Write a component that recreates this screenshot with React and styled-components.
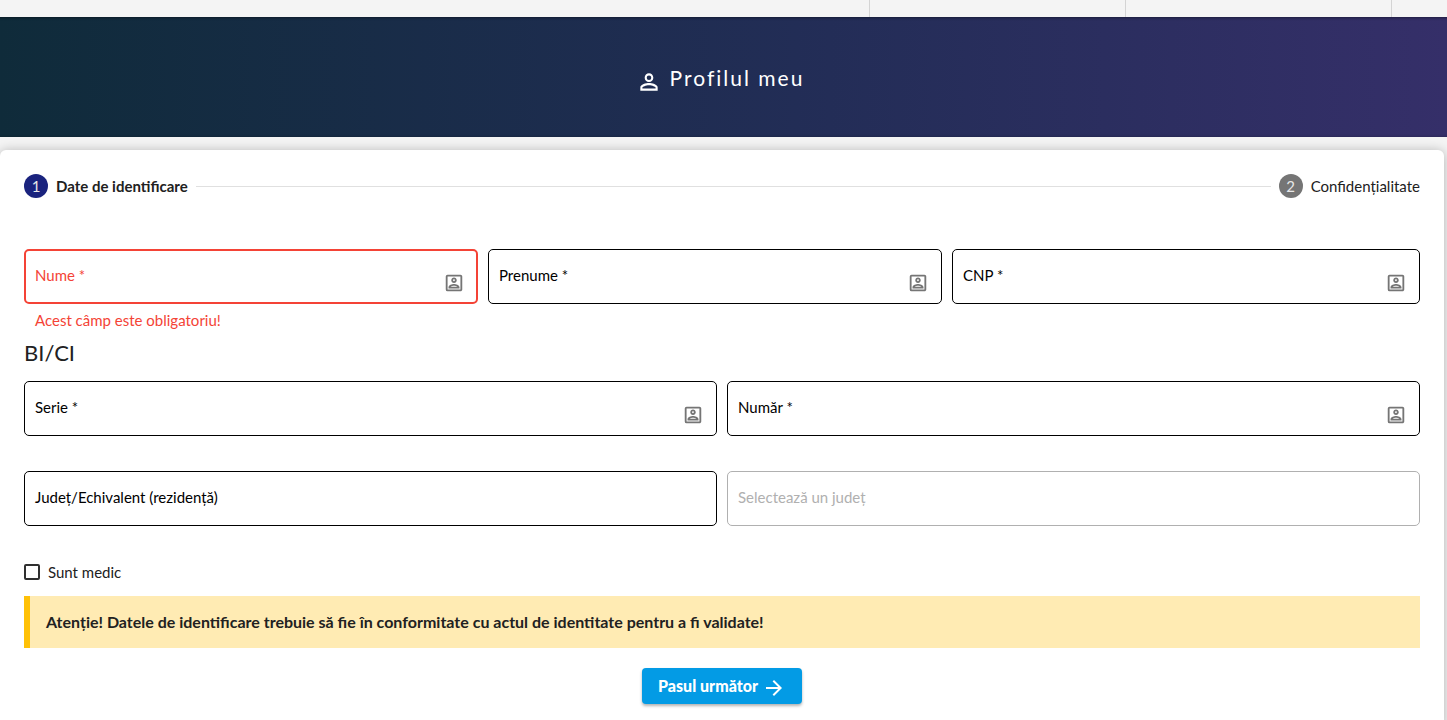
import { useState } from "react";
import styled, { createGlobalStyle } from "styled-components";
import {
  MdOutlinePortrait,
  MdPersonOutline,
  MdArrowForward,
} from "react-icons/md";

const GlobalStyle = createGlobalStyle`
  *, *::before, *::after {
    box-sizing: border-box;
  }

  body {
    margin: 0;
    background-color: #f4f4f4;
    color: #212121;
    font-family: Lato, "Liberation Sans", sans-serif;
    font-size: 15px;
    line-height: 20px;
    overflow: hidden;
  }
`;

const TopBar = styled.nav`
  display: flex;
  justify-content: flex-end;
  height: 17px;
`;

const TopBarCell = styled.div`
  width: ${(props) => props.$width}px;
  border-left: 1px solid #d4d4d4;
`;

const Banner = styled.header`
  display: flex;
  align-items: center;
  justify-content: center;
  gap: 8px;
  height: 120px;
  padding: 2px 7px 0 0;
  color: #fff;
  background: linear-gradient(to right, #0f2b3a, #222d56 55%, #352f69);
  box-shadow: inset 0 4px 3px -3px rgba(0, 0, 0, 0.4),
    inset 0 -3px 3px -3px rgba(0, 0, 0, 0.3);

  svg {
    margin-top: 8px;
  }
`;

const Title = styled.h1`
  margin: 0;
  font-size: 21px;
  font-weight: 400;
  line-height: 28px;
  letter-spacing: 2px;
`;

const Card = styled.main`
  margin: 13px 3px 0 0;
  padding: 24px;
  background-color: #fff;
  border-radius: 6px;
  box-shadow: 0 1px 12px rgba(0, 0, 0, 0.28);
`;

const Stepper = styled.ol`
  display: flex;
  align-items: center;
  gap: 8px;
  margin: 0 0 51px;
  padding: 0;
  list-style: none;
`;

const Step = styled.li`
  display: flex;
  align-items: center;
  gap: 8px;
  font-weight: ${(props) => (props.$active ? 700 : 400)};
`;

const StepNumber = styled.span`
  width: 24px;
  height: 24px;
  border-radius: 50%;
  background-color: ${(props) => (props.$active ? "#1a237e" : "#757575")};
  color: #e8e8e8;
  font-size: 15px;
  font-weight: 400;
  line-height: 25px;
  text-align: center;
`;

const StepLine = styled.li`
  flex: 1;
  height: 1px;
  background-color: #e0e0e0;
`;

const Row = styled.div`
  display: grid;
  grid-template-columns: ${(props) => props.$columns || "1fr 1fr"};
  column-gap: 10px;
  margin-bottom: ${(props) => props.$space || 0}px;
`;

const FieldBox = styled.div`
  position: relative;
  height: 55px;
  color: ${(props) =>
    props.$error ? "#f44336" : props.$disabled ? "#b0b0b0" : "#000"};

  label {
    position: absolute;
    top: 16px;
    left: 11px;
    pointer-events: none;
  }

  svg {
    position: absolute;
    right: 13px;
    bottom: 10px;
    color: #757575;
  }
`;

const Input = styled.input`
  width: 100%;
  height: 100%;
  padding: 0 44px 0 11px;
  border: ${(props) => (props.$error ? 2 : 1)}px solid currentColor;
  border-radius: 5px;
  background: transparent;
  color: inherit;
  font: inherit;
  outline: none;
`;

const ErrorText = styled.p`
  margin: 6px 0 0 11px;
  color: #f44336;
`;

const SectionTitle = styled.h2`
  margin: 9px 0 14px;
  font-size: 22px;
  font-weight: 400;
  line-height: 28px;
`;

const CheckLabel = styled.label`
  display: flex;
  align-items: center;
  gap: 8px;
  margin-bottom: 14px;
`;

const Checkbox = styled.input`
  appearance: none;
  width: 16px;
  height: 16px;
  margin: 0;
  border: 2px solid #303030;
  border-radius: 2px;

  &:checked {
    background-color: #1a237e;
  }
`;

const Alert = styled.div`
  padding: 16px;
  border-left: 6px solid #ffc107;
  background-color: #ffebb3;
  font-size: 16px;
  font-weight: 700;
`;

const Actions = styled.div`
  display: flex;
  justify-content: center;
  margin-top: 20px;
`;

const NextButton = styled.button`
  display: flex;
  align-items: center;
  gap: 4px;
  height: 36px;
  padding: 0 16px;
  border: 0;
  border-radius: 4px;
  background-color: #039be5;
  color: #fff;
  font: inherit;
  font-size: 16px;
  font-weight: 900;
  box-shadow: 0 2px 3px rgba(0, 0, 0, 0.3);
  cursor: pointer;

  svg {
    margin-top: 4px;
  }
`;

function Field({ id, label, icon, error, disabled }) {
  const [value, setValue] = useState("");

  return (
    <div>
      <FieldBox $error={error} $disabled={disabled}>
        <Input
          id={id}
          value={value}
          onChange={(e) => setValue(e.target.value)}
          disabled={disabled}
          $error={error}
        />
        {!value && <label htmlFor={id}>{label}</label>}
        {icon && <MdOutlinePortrait size={22} />}
      </FieldBox>
      {error && <ErrorText>{error}</ErrorText>}
    </div>
  );
}

function App() {
  return (
    <>
      <GlobalStyle />
      <TopBar>
        <TopBarCell $width={256} />
        <TopBarCell $width={266} />
        <TopBarCell $width={56} />
      </TopBar>
      <Banner>
        <MdPersonOutline size={26} />
        <Title>Profilul meu</Title>
      </Banner>
      <Card>
        <Stepper>
          <Step $active>
            <StepNumber $active>1</StepNumber>
            Date de identificare
          </Step>
          <StepLine />
          <Step>
            <StepNumber>2</StepNumber>
            Confidențialitate
          </Step>
        </Stepper>
        <form onSubmit={(e) => e.preventDefault()}>
          <Row $columns="454fr 454fr 468fr">
            <Field
              id="nume"
              label="Nume *"
              icon
              error="Acest câmp este obligatoriu!"
            />
            <Field id="prenume" label="Prenume *" icon />
            <Field id="cnp" label="CNP *" icon />
          </Row>
          <SectionTitle>BI/CI</SectionTitle>
          <Row $space={35}>
            <Field id="serie" label="Serie *" icon />
            <Field id="numar" label="Număr *" icon />
          </Row>
          <Row $space={36}>
            <Field id="judet" label="Județ/Echivalent (rezidență)" />
            <Field id="localitate" label="Selectează un județ" disabled />
          </Row>
          <CheckLabel>
            <Checkbox type="checkbox" />
            Sunt medic
          </CheckLabel>
          <Alert>
            Atenție! Datele de identificare trebuie să fie în conformitate cu
            actul de identitate pentru a fi validate!
          </Alert>
          <Actions>
            <NextButton type="submit">
              Pasul următor
              <MdArrowForward size={24} />
            </NextButton>
          </Actions>
        </form>
      </Card>
    </>
  );
}

export default App;
